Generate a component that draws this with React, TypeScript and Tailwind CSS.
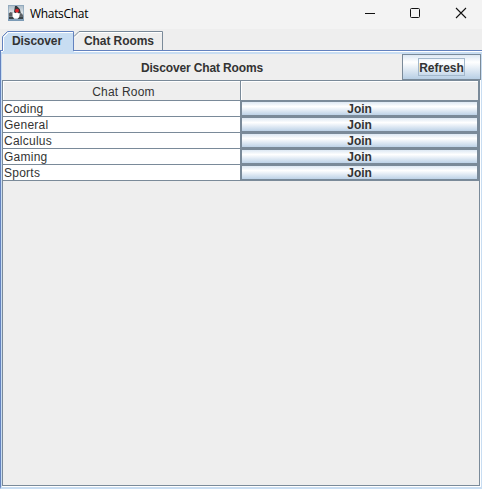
const rooms = ["Coding", "General", "Calculus", "Gaming", "Sports"];

function JavaIcon() {
  return (
    <svg width="16" height="16" viewBox="0 0 16 16" className="block shrink-0">
      <defs>
        <linearGradient id="sky" x1="0" y1="0" x2="0" y2="1">
          <stop offset="0" stopColor="#a9b9c6" />
          <stop offset="0.5" stopColor="#dfe5e9" />
          <stop offset="0.8" stopColor="#a3b4c2" />
          <stop offset="1" stopColor="#6d93b5" />
        </linearGradient>
      </defs>
      <rect width="16" height="16" fill="url(#sky)" />
      <path d="M0.500 8.500l2-1.500 3 1v3H1zM11 8l3 .5 1.500 3H11z" fill="#5c6166" />
      <path d="M1 11.500h4l1 2.500H1zM10.500 11.500H15v2.500h-5z" fill="#3c4246" />
      <path d="M4.500 8h7.500l-1 4.500-2 1H6.500l-2-2z" fill="#fff" />
      <path d="M6 7L7 1h1.800l3 3 1 4-2 .5L9 7 7.500 8.500z" fill="#33373b" />
      <path d="M6.500 8.500l2.500-1 1.500 1.500-1 4H6.500z" fill="#fff" />
      <circle cx="9" cy="5.700" r="1.900" fill="#e0242b" />
      <rect x="0.5" y="0.5" width="15" height="15" fill="none" stroke="#7f9db5" strokeOpacity="0.6" />
    </svg>
  );
}

function TitleBar() {
  return (
    <header className="flex h-[29px] shrink-0 items-start bg-[#f3f3f3] pl-2">
      <div className="pt-[5px]"><JavaIcon /></div>
      <span className="ml-[6px] mt-[6px] font-['Open_Sans',sans-serif] text-[12px] leading-4 tracking-[-0.32px] text-black">WhatsChat</span>
      <svg width="118" height="29" viewBox="0 0 118 29" className="ml-auto" fill="none" stroke="#111">
        <path d="M1 13.5h10" />
        <rect x="46.5" y="8.5" width="9" height="9" rx="1" />
        <path d="M92 8l10 10M102 8l-10 10" strokeWidth="1.1" />
      </svg>
    </header>
  );
}

function Tabs() {
  return (
    <nav className="flex h-[25px] shrink-0 flex-col bg-[#eeeeee]">
      <div className="relative h-[25px]">
        <svg width="482" height="25" viewBox="0 0 482 25" className="absolute inset-0">
          <rect x="0" y="21" width="482" height="1" fill="#6382bf" />
          <rect x="0" y="22" width="482" height="1" fill="#fff" />
          <rect x="0" y="23" width="482" height="2" fill="#c8ddf2" />
          <path d="M3 23V8l5-5h66v20z" fill="#c8ddf2" />
          <path d="M3.5 22V8.500l5-5H73" stroke="#fff" fill="none" />
          <path d="M2.500 22V7.500l5-5H73.500V22" stroke="#6382bf" fill="none" />
          <path d="M75 8.500l5-5H162" stroke="#fff" fill="none" />
          <path d="M74 7.500l5-5H162.500V21" stroke="#7a8a99" fill="none" />
          <rect x="0" y="22" width="1" height="3" fill="#6382bf" />
        </svg>
        <div className="relative flex pt-[4px] font-bold leading-4 tracking-[-0.08px]">
          <span className="ml-3 w-[72px]">Discover</span>
          <span>Chat Rooms</span>
        </div>
      </div>
    </nav>
  );
}

function Toolbar() {
  return (
    <div className="flex h-[26px] shrink-0 bg-[#eeeeee]">
      <div className="flex w-[400px] items-center justify-center pt-px font-bold tracking-[-0.13px]">Discover Chat Rooms</div>
      <button className="flex h-[26px] w-[79px] items-start justify-center border border-[#7a8a99] bg-linear-to-b from-[#dde8f3] via-white via-30% to-[#b8cfe5] pt-[3px] font-bold">
        <span className="flex h-[18px] w-[47px] items-center justify-center border border-[#a3b8cc] pt-[2px] leading-4">Refresh</span>
      </button>
    </div>
  );
}

function RoomTable() {
  return (
    <section className="flex min-h-0 flex-1 flex-col border border-r-0 border-[#7a8a99] bg-[#eeeeee]">
      <div className="flex h-5 shrink-0 border-b border-[#7a8a99]">
        <div className="w-[238px] border-r border-[#7a8a99] pl-[4px] text-center leading-[22px] tracking-[0.22px] shadow-[inset_1px_1px_white]">Chat Room</div>
        <div className="w-[239px] border-r-2 border-[#7a8a99] shadow-[inset_1px_1px_white]" />
      </div>
      {rooms.map((room) => (
        <div key={room} className="flex h-4 shrink-0">
          <div className="w-[237px] border-b border-[#7a8a99] bg-white pl-px leading-[17px] tracking-[0.25px]">{room}</div>
          <div className="w-[240px] bg-[#7a8a99] pl-[2px] pt-px">
            <button className="block h-[13px] w-[235px] bg-linear-to-b from-[#dde8f3] via-white via-35% to-[#bdd2e7] text-center font-bold leading-[15px] tracking-[-0.1px]">Join</button>
          </div>
        </div>
      ))}
      <div className="flex-1 border-r border-[#7a8a99]" />
    </section>
  );
}

export default function App() {
  return (
    <main className="flex h-[489px] w-[482px] flex-col overflow-hidden bg-[#eeeeee] font-['Liberation_Sans',Arial,sans-serif] text-[12px] text-[#333333]">
      <TitleBar />
      <Tabs />
      <div className="flex min-h-0 flex-1 flex-col border-b-2 border-l border-r border-b-[#c8ddf2] border-l-[#6382bf] border-r-[#c8ddf2]">
        <div className="flex min-h-0 flex-1 flex-col border-l border-[#c8ddf2]">
          <Toolbar />
          <div className="flex min-h-0 flex-1 flex-col border-b border-r border-white bg-white">
            <RoomTable />
          </div>
        </div>
      </div>
    </main>
  );
}
